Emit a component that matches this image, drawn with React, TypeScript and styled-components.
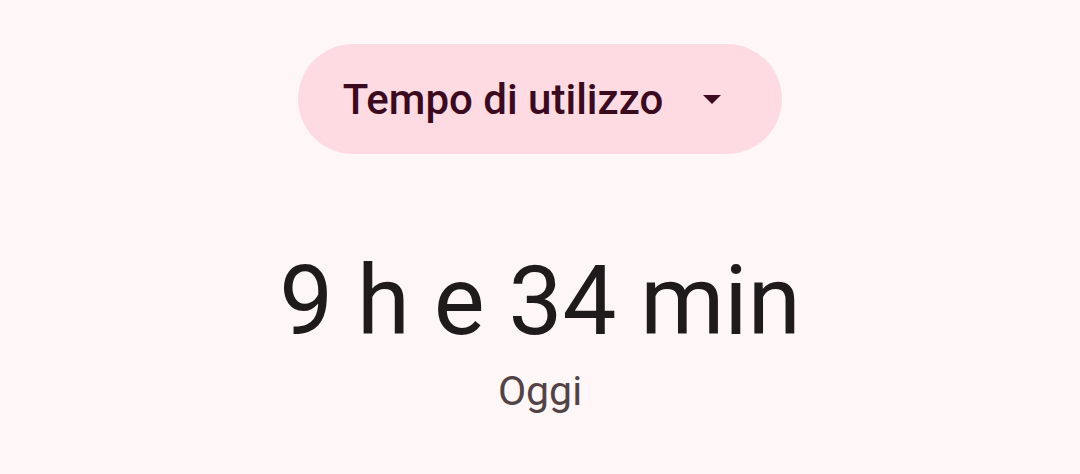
import React from 'react';
import styled, { createGlobalStyle } from 'styled-components';

const GlobalStyle = createGlobalStyle`
  html, body {
    margin: 0;
    padding: 0;
    background: #fff7f7;
    font-family: Roboto, "Noto Sans", sans-serif;
  }
`;

const Screen = styled.div`
  width: 1080px;
  height: 474px;
  display: flex;
  flex-direction: column;
  align-items: center;
  padding-top: 44px;
  box-sizing: border-box;
`;

const Chip = styled.button`
  display: flex;
  align-items: center;
  gap: 40px;
  height: 110px;
  padding: 0 61px 0 45px;
  border: none;
  border-radius: 55px;
  background: #fedbe2;
  color: #3c0a1e;
  font-family: Roboto, sans-serif;
  font-size: 42px;
  font-weight: 500;
  cursor: pointer;
`;

const Arrow = styled.svg`
  width: 18px;
  height: 9px;
  fill: #3c0a1e;
`;

const Total = styled.div`
  margin-top: 99px;
  font-size: 96px;
  line-height: 1;
  color: #1f1a1b;
`;

const Caption = styled.div`
  margin-top: 18px;
  font-size: 41px;
  color: #534346;
`;

const App = () => {
  return (
    <>
      <GlobalStyle />
      <Screen>
        <Chip>
          Tempo di utilizzo
          <Arrow viewBox="0 0 18 9">
            <path d="M0 0h18L9 9z" />
          </Arrow>
        </Chip>
        <Total>9 h e 34 min</Total>
        <Caption>Oggi</Caption>
      </Screen>
    </>
  );
};

export default App;
